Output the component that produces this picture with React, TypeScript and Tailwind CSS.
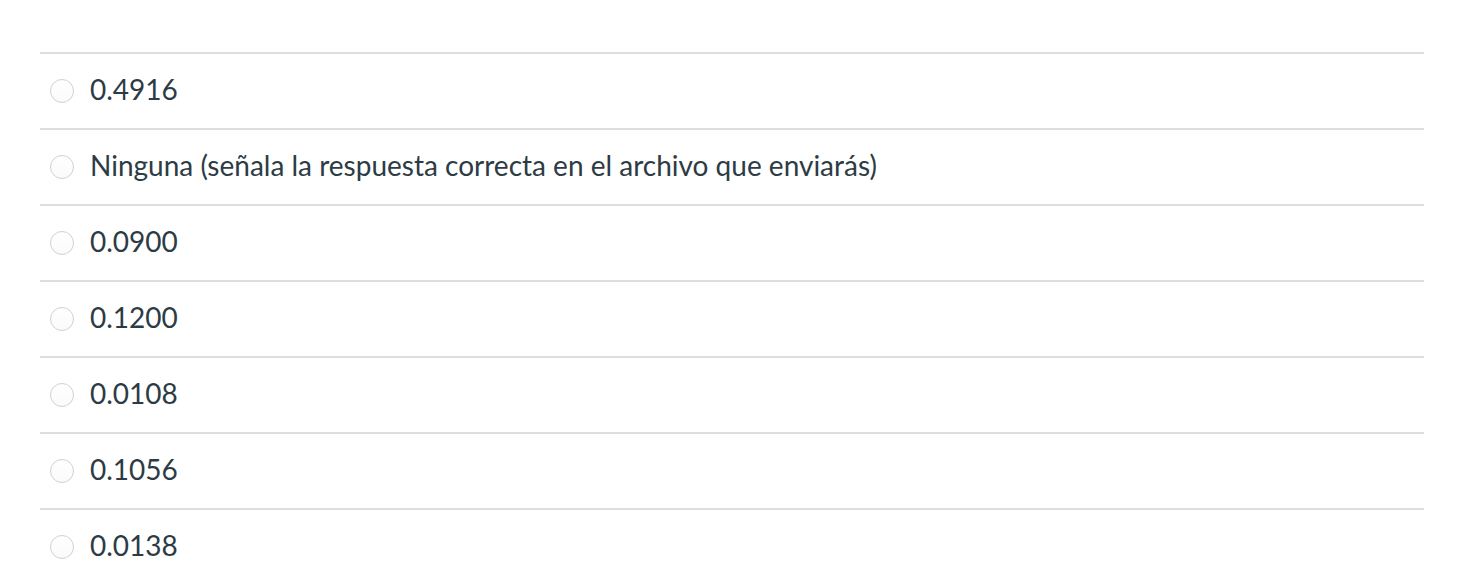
const OPTIONS = [
  '0.4916',
  'Ninguna (señala la respuesta correcta en el archivo que enviarás)',
  '0.0900',
  '0.1200',
  '0.0108',
  '0.1056',
  '0.0138',
];

function Radio() {
  return (
    <span className="w-6 h-6 rounded-full shrink-0 border border-[#d0d0d0] bg-gradient-to-b from-[#ffffff] to-[#fafafa]" />
  );
}

export default function App() {
  return (
    <div className="bg-white min-h-[588px] pt-[52px] px-[40px]" style={{ fontFamily: 'Lato, "Noto Sans", sans-serif' }}>
      {OPTIONS.map((label, i) => (
        <div key={i} className="flex items-center gap-4 h-[76px] border-t-2 border-[#dddddd] pl-[10px]">
          <Radio />
          <span className="text-[28px] leading-[32px] text-[#2d3b45] pb-[5px]">{label}</span>
        </div>
      ))}
    </div>
  );
}
